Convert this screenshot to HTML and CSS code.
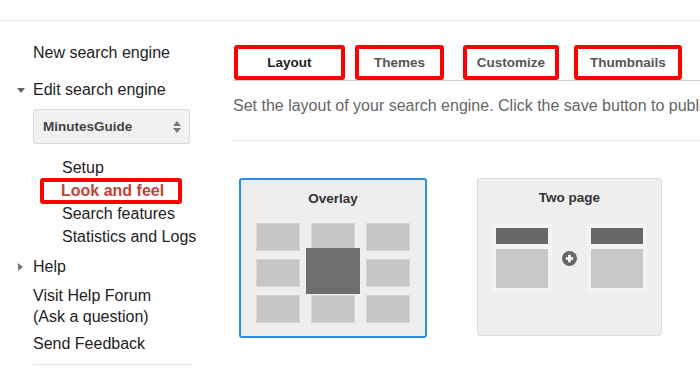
FILE: index.html
```html
<!DOCTYPE html>
<html lang="en">
<head>
<meta charset="utf-8">
<title>Look and feel</title>
<link rel="stylesheet" href="styles.css">
</head>
<body>
<div class="topbar"></div>
<div class="page">
  <nav class="sidebar">
    <div class="nav-item first">New search engine</div>
    <div class="nav-item expander"><span class="tri-down"></span>Edit search engine</div>
    <div class="select">
      <span class="select-label">MinutesGuide</span>
      <span class="spin"><i class="spin-up"></i><i class="spin-down"></i></span>
    </div>
    <ul class="sub">
      <li>Setup</li>
      <li class="current">Look and feel</li>
      <li>Search features</li>
      <li>Statistics and Logs</li>
    </ul>
    <div class="nav-item help"><span class="tri-right"></span>Help</div>
    <div class="nav-item forum">Visit Help Forum<br>(Ask a question)</div>
    <div class="nav-item feedback">Send Feedback</div>
    <div class="rule"></div>
  </nav>
  <main class="main">
    <div class="tabs">
      <div class="tab tab-layout active">Layout</div>
      <div class="tab tab-themes">Themes</div>
      <div class="tab tab-customize">Customize</div>
      <div class="tab tab-thumbs">Thumbnails</div>
    </div>
    <p class="desc">Set the layout of your search engine. Click the save button to publish your changes.</p>
    <div class="sep"></div>
    <div class="cards">
      <div class="card card-overlay">
        <div class="card-title">Overlay</div>
        <div class="overlay-grid">
          <span class="tile"></span><span class="tile"></span><span class="tile"></span>
          <span class="tile"></span><span class="tile"></span><span class="tile"></span>
          <span class="tile"></span><span class="tile"></span><span class="tile"></span>
          <span class="overlay-box"></span>
        </div>
      </div>
      <div class="card card-twopage">
        <div class="card-title">Two page</div>
        <div class="pages">
          <div class="pg"><span class="pg-head"></span><span class="pg-body"></span></div>
          <svg class="plus" width="15" height="15" viewBox="0 0 15 15">
            <circle cx="7.5" cy="7.5" r="7.5" fill="#666"/>
            <path d="M7.5 3.8v7.4M3.8 7.5h7.4" stroke="#fff" stroke-width="2.6"/>
          </svg>
          <div class="pg"><span class="pg-head"></span><span class="pg-body"></span></div>
        </div>
      </div>
    </div>
  </main>
</div>
</body>
</html>
```
FILE: styles.css
```css
html, body {
  margin: 0;
  padding: 0;
  background: #fff;
  overflow: hidden;
}
body {
  font-family: "Liberation Sans", Arial, sans-serif;
  font-size: 16px;
  color: #222;
  width: 700px;
  height: 375px;
}
.topbar {
  height: 20px;
  border-bottom: 1px solid #e6e6e6;
}
.page {
  display: flex;
}
.sidebar {
  width: 233px;
  flex: none;
  box-sizing: border-box;
  padding: 22px 41px 0 33px;
}
.nav-item {
  line-height: 20px;
  white-space: nowrap;
}
.expander {
  margin-top: 17px;
  display: flex;
  align-items: center;
}
.tri-down {
  width: 0;
  height: 0;
  border-top: 5px solid #666;
  border-left: 4px solid transparent;
  border-right: 4px solid transparent;
  margin-left: -16px;
  margin-right: 8px;
}
.select {
  margin-top: 9px;
  width: 157px;
  height: 35px;
  box-sizing: border-box;
  border: 1px solid #dcdcdc;
  border-radius: 2px;
  background: #f1f1f1;
  display: flex;
  align-items: center;
  justify-content: space-between;
  padding: 0 9px;
}
.select-label {
  font-size: 13.5px;
  font-weight: bold;
  color: #444;
}
.spin {
  display: flex;
  flex-direction: column;
  gap: 2px;
  margin-right: -1px;
}
.spin-up, .spin-down {
  width: 0;
  height: 0;
  border-left: 4px solid transparent;
  border-right: 4px solid transparent;
}
.spin-up { border-bottom: 5px solid #777; }
.spin-down { border-top: 5px solid #777; }
.sub {
  list-style: none;
  margin: 12px 0 0;
  padding: 0 0 0 29px;
}
.sub li {
  line-height: 23px;
  white-space: nowrap;
}
.sub li.current {
  position: relative;
  font-weight: bold;
  color: #c3423a;
  margin-left: -1px;
}
.sub li.current::after {
  content: "";
  position: absolute;
  left: -21px;
  top: -1px;
  width: 142px;
  height: 26px;
  box-sizing: border-box;
  border: 4px solid #f00;
  border-radius: 3px;
}
.help {
  margin-top: 9px;
  display: flex;
  align-items: center;
}
.tri-right {
  width: 0;
  height: 0;
  border-left: 5px solid #777;
  border-top: 4.5px solid transparent;
  border-bottom: 4.5px solid transparent;
  margin-left: -15px;
  margin-right: 10px;
}
.forum {
  margin-top: 8px;
  line-height: 21px;
}
.feedback {
  margin-top: 7px;
}
.rule {
  margin-top: 10px;
  border-top: 1px solid #e3e3e3;
}
.main {
  flex: 1;
  min-width: 0;
  overflow: hidden;
}
.tabs {
  display: flex;
  padding-top: 24px;
  border-bottom: 1px solid #cfcfcf;
}
.tab {
  height: 35px;
  box-sizing: border-box;
  border: 4px solid #f00;
  border-radius: 3px;
  line-height: 27px;
  text-align: center;
  font-size: 13.5px;
  font-weight: bold;
  color: #555;
  white-space: nowrap;
}
.tab.active { color: #222; }
.tab-layout { width: 111px; margin-left: 1px; }
.tab-themes { width: 89px; margin-left: 10px; }
.tab-customize { width: 96px; margin-left: 19px; }
.tab-thumbs { width: 108px; margin-left: 15px; }
.desc {
  margin: 15px 0 0;
  line-height: 20px;
  color: #666;
  white-space: nowrap;
}
.sep {
  margin-top: 24px;
  border-top: 1px solid #e6e6e6;
}
.cards {
  display: flex;
  align-items: flex-start;
  padding: 37px 0 0 6px;
  gap: 50px;
}
.card {
  box-sizing: border-box;
  background: #eee;
  border-radius: 3px;
  padding-top: 11px;
}
.card-overlay {
  width: 188px;
  height: 160px;
  border: 2px solid #2a8fe0;
}
.card-twopage {
  width: 185px;
  height: 158px;
  border: 1px solid #dcdcdc;
}
.card-title {
  text-align: center;
  font-size: 13.5px;
  font-weight: bold;
  color: #333;
  line-height: 16px;
}
.overlay-grid {
  position: relative;
  margin: 17px 0 0 16px;
  width: 152px;
  display: grid;
  grid-template-columns: 42px 42px 42px;
  grid-auto-rows: 26px;
  column-gap: 13px;
  row-gap: 10px;
}
.tile {
  background: #c6c6c6;
  box-shadow: 0 0 0 1px #d6d6d6;
}
.overlay-box {
  position: absolute;
  left: 49px;
  top: 24px;
  width: 54px;
  height: 46px;
  background: #6e6e6e;
}
.pages {
  display: flex;
  align-items: center;
  margin: 17px 0 0 14px;
}
.pg {
  width: 60px;
  height: 70px;
  box-sizing: border-box;
  background: #f3f3f3;
  padding: 5px 4px;
  display: flex;
  flex-direction: column;
  gap: 5px;
}
.pg-head {
  height: 16px;
  background: #666;
}
.pg-body {
  height: 39px;
  background: #c8c8c8;
}
.plus {
  margin: 0 10px;
  flex: none;
}
```
